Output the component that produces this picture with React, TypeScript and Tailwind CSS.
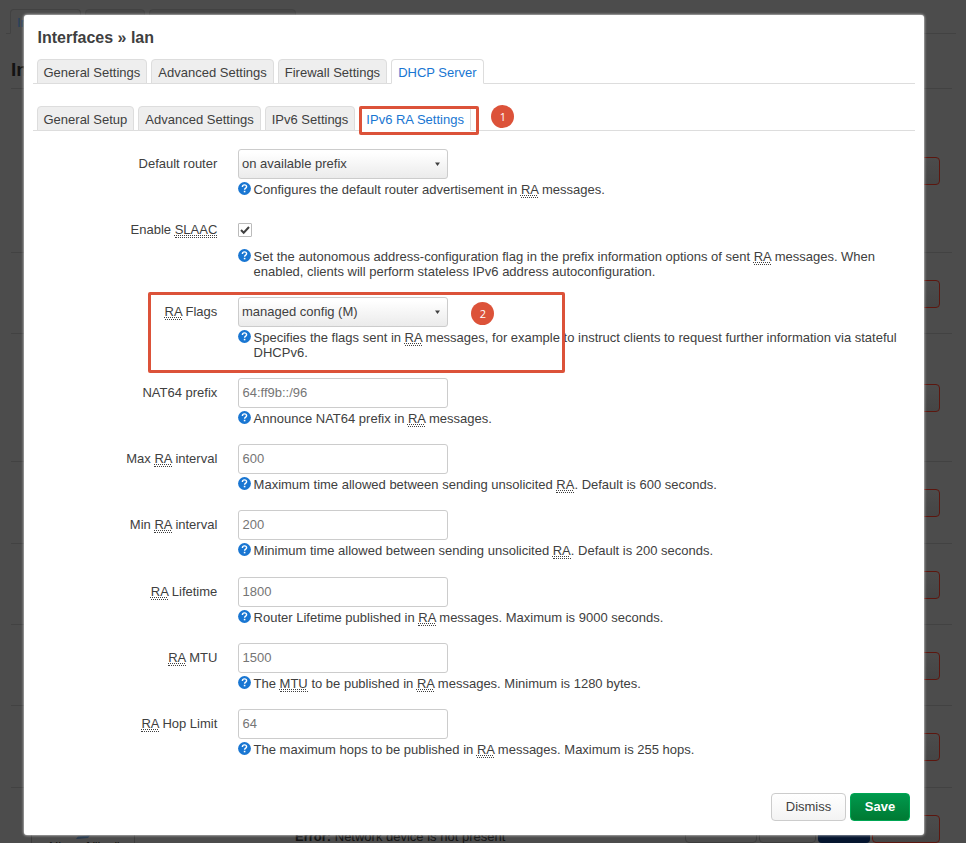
import clsx from 'clsx'
import { ReactNode } from 'react'

interface TabsProps {
  items: string[]
  active: string
}

interface FieldProps {
  label: ReactNode
  help: ReactNode
  className: string
  children: ReactNode
}

const Abbr = ({ children }: { children: ReactNode }) => (
  <span className="border-b border-dotted border-[#404040] underline decoration-dotted decoration-1 underline-offset-1">
    {children}
  </span>
)

const Tabs = ({ items, active }: TabsProps) => (
  <div className="flex h-[25px] w-[882px] gap-1 border-b border-[#ddd] pl-[3.5px]">
    {items.map((item) => (
      <div
        key={item}
        className={clsx(
          'h-[25px] whitespace-nowrap rounded-t border border-[#ddd] px-1.5 text-[13px] leading-[25px]',
          item === active
            ? 'border-b-white bg-white text-[#1976d2]'
            : 'bg-[#eee] text-[#404040]'
        )}
      >
        {item}
      </div>
    ))}
  </div>
)

const HelpIcon = () => (
  <svg className="size-[13px] shrink-0" viewBox="0 0 13 13">
    <circle cx="6.5" cy="6.5" r="6.4" fill="#1976d2" />
    <path
      d="M4.4 5C4.4 3.6 5.3 2.9 6.5 2.9S8.6 3.6 8.6 4.7C8.6 6.1 6.6 6.2 6.6 7.8"
      fill="none"
      stroke="#fff"
      strokeWidth="1.4"
    />
    <rect x="5.8" y="8.8" width="1.6" height="1.5" fill="#fff" />
  </svg>
)

const Field = ({ label, help, className, children }: FieldProps) => (
  <div className={clsx('flex', className)}>
    <div className="w-[184.3px] text-right leading-[29px]">{label}</div>
    <div className="ml-[20.7px] w-[665px]">
      {children}
      <div className="mt-[3px] flex gap-[2.6px]">
        <HelpIcon />
        <div className="leading-[15px]">{help}</div>
      </div>
    </div>
  </div>
)

const Select = ({ value }: { value: string }) => (
  <div className="flex h-[30px] w-[210px] items-center justify-between rounded-[3px] border border-[#ccc] bg-linear-to-b from-white from-10% to-[#ebebeb] pl-[3px] pr-[7px]">
    <span className="pb-px">{value}</span>
    <svg className="h-[4px] w-[5px]" viewBox="0 0 5 4">
      <path d="M0 0.5H5L2.5 4Z" fill="#404040" />
    </svg>
  </div>
)

const Input = ({ placeholder }: { placeholder: string }) => (
  <input
    className="block h-[30px] w-[210px] rounded-[3px] border border-[#ccc] bg-white px-[3.5px] pb-0.5 text-[13px] outline-none placeholder:text-[#757575]"
    placeholder={placeholder}
  />
)

const Checkbox = () => (
  <div className="flex h-[31px] items-center pb-0.5">
    <div className="flex size-3.5 items-center justify-center rounded-[1px] border border-[#bbb]">
      <svg className="size-3" viewBox="0 0 12 12">
        <path d="M2 6L4.7 8.7L10 3" fill="none" stroke="#404040" strokeWidth="2" />
      </svg>
    </div>
  </div>
)

const Marker = ({ children, className }: { children: ReactNode; className: string }) => (
  <div
    className={clsx(
      'absolute flex size-[23px] items-center justify-center rounded-full bg-[#dc5239] font-["Open_Sans",sans-serif] text-[11px] text-white',
      className
    )}
  >
    {children}
  </div>
)

const interfaceRows = [
  'h-[164px]',
  'h-[81px]',
  'h-[128px]',
  'h-[82px]',
  'h-[81px]',
  'h-[81px]',
  'h-[82px]',
]

const DeleteButton = () => (
  <div className="h-7 w-[68px] rounded border border-[#5c160e] bg-linear-to-b from-[#4c4c4c] to-[#454545]" />
)

const InterfacesPage = () => (
  <div className="h-[843px] overflow-hidden bg-[#4c4c4c] pt-[9px] text-[#131313]">
    <div className="ml-1.5 flex h-[25px] w-[950px] gap-1 border-b border-[#424242] pl-1">
      <div className="h-[25px] w-[71px] rounded-t border border-[#424242] border-b-[#4c4c4c] bg-[#4c4c4c] pl-1.5 text-[13px] leading-[25px] text-[#223f5e]">
        Interfaces
      </div>
      <div className="h-6 w-[60px] rounded-t border border-[#424242] bg-[#474747]" />
      <div className="h-6 w-[147px] rounded-t border border-[#424242] bg-[#474747]" />
    </div>
    <div className="ml-[11px] w-[941px]">
      <div className="h-[55px] border-b border-[#424242] pt-[17px] text-[19px] font-bold leading-[38px]">
        Interfaces
      </div>
      {interfaceRows.map((height, i) => (
        <div
          key={i}
          className={clsx(
            'flex items-center justify-end border-b border-[#424242] pr-3 pt-px',
            height
          )}
        >
          <DeleteButton />
        </div>
      ))}
      <div className="flex h-[81px] items-center pr-3">
        <div className="ml-5 flex h-[60px] w-[104px] flex-col items-center border border-[#3c3c3c] pt-[27px] text-[13px] leading-[13px]">
          <svg className="h-[13px] w-4 shrink-0" viewBox="0 0 16 13">
            <path d="M1 12L3 9.5L15 8.5L13 11Z" fill="#24364a" />
          </svg>
          <span className="whitespace-nowrap">Alias of &quot;lan&quot;</span>
        </div>
        <div className="ml-[160px] flex-1 pt-[17px] text-[13px]">
          <b>Error:</b> Network device is not present
        </div>
        <div className="flex gap-0.5">
          <div className="h-7 w-[72px] rounded border border-[#3c3c3c]" />
          <div className="h-7 w-[57px] rounded border border-[#3c3c3c]" />
          <div className="h-7 w-[52px] rounded bg-[#05152f]" />
          <DeleteButton />
        </div>
      </div>
    </div>
  </div>
)

const InterfaceModal = () => (
  <div className="absolute left-6 top-[15px] h-[820px] w-[900px] rounded-[3px] bg-white pl-[9px] pt-3 shadow-[0_0_3px_#fff]">
    <h4 className="ml-[4.5px] text-[16px] font-bold leading-[22px]">Interfaces » lan</h4>
    <div className="mt-[10px]">
      <Tabs
        items={['General Settings', 'Advanced Settings', 'Firewall Settings', 'DHCP Server']}
        active="DHCP Server"
      />
    </div>
    <div className="mt-[22px]">
      <Tabs
        items={['General Setup', 'Advanced Settings', 'IPv6 Settings', 'IPv6 RA Settings']}
        active="IPv6 RA Settings"
      />
    </div>

    <div className="pt-[18px]">
      <Field
        className="h-[66px]"
        label="Default router"
        help={<>Configures the default router advertisement in <Abbr>RA</Abbr> messages.</>}
      >
        <Select value="on available prefix" />
      </Field>
      <Field
        className="h-[82px]"
        label={<>Enable <Abbr>SLAAC</Abbr></>}
        help={
          <>
            Set the autonomous address-configuration flag in the prefix information options of sent{' '}
            <Abbr>RA</Abbr> messages. When<br />
            enabled, clients will perform stateless IPv6 address autoconfiguration.
          </>
        }
      >
        <Checkbox />
      </Field>
      <Field
        className="h-[81px]"
        label={<><Abbr>RA</Abbr> Flags</>}
        help={
          <>
            Specifies the flags sent in <Abbr>RA</Abbr> messages, for example to instruct clients to
            request further information via stateful<br />
            DHCPv6.
          </>
        }
      >
        <Select value="managed config (M)" />
      </Field>
      <Field
        className="h-[66px]"
        label="NAT64 prefix"
        help={<>Announce NAT64 prefix in <Abbr>RA</Abbr> messages.</>}
      >
        <Input placeholder="64:ff9b::/96" />
      </Field>
      <Field
        className="h-[66px]"
        label={<>Max <Abbr>RA</Abbr> interval</>}
        help={
          <>
            Maximum time allowed between sending unsolicited <Abbr>RA</Abbr>. Default is 600 seconds.
          </>
        }
      >
        <Input placeholder="600" />
      </Field>
      <Field
        className="h-[67px]"
        label={<>Min <Abbr>RA</Abbr> interval</>}
        help={
          <>
            Minimum time allowed between sending unsolicited <Abbr>RA</Abbr>. Default is 200 seconds.
          </>
        }
      >
        <Input placeholder="200" />
      </Field>
      <Field
        className="h-[66px]"
        label={<><Abbr>RA</Abbr> Lifetime</>}
        help={
          <>
            Router Lifetime published in <Abbr>RA</Abbr> messages. Maximum is 9000 seconds.
          </>
        }
      >
        <Input placeholder="1800" />
      </Field>
      <Field
        className="h-[66px]"
        label={<><Abbr>RA</Abbr> MTU</>}
        help={
          <>
            The <Abbr>MTU</Abbr> to be published in <Abbr>RA</Abbr> messages. Minimum is 1280 bytes.
          </>
        }
      >
        <Input placeholder="1500" />
      </Field>
      <Field
        className="h-[84px]"
        label={<><Abbr>RA</Abbr> Hop Limit</>}
        help={
          <>
            The maximum hops to be published in <Abbr>RA</Abbr> messages. Maximum is 255 hops.
          </>
        }
      >
        <Input placeholder="64" />
      </Field>
    </div>

    <div className="flex justify-end gap-1 pr-3.5">
      <button className="h-7 w-[75px] rounded border border-[#ccc] bg-linear-to-b from-white to-[#f3f3f3] text-[13px]">
        Dismiss
      </button>
      <button className="h-7 w-[60px] rounded border border-[#00a654] bg-linear-to-b from-[#00994d] to-[#007a33] text-[13px] font-bold text-white">
        Save
      </button>
    </div>
  </div>
)

const App = () => (
  <div className='relative h-[843px] w-[966px] overflow-hidden font-["Liberation_Sans",Arial,sans-serif] text-[13px] text-[#404040]'>
    <InterfacesPage />
    <InterfaceModal />
    <div className="absolute left-[359px] top-[106px] h-[29px] w-[120px] rounded-[2px] border-3 border-[#dc5239]" />
    <Marker className="left-[491.4px] top-[105.4px]">1</Marker>
    <div className="absolute left-[148px] top-[292px] h-[81px] w-[417px] rounded-[2px] border-3 border-[#dc5239]" />
    <Marker className="left-[471.4px] top-[302.4px]">2</Marker>
  </div>
)

export default App
